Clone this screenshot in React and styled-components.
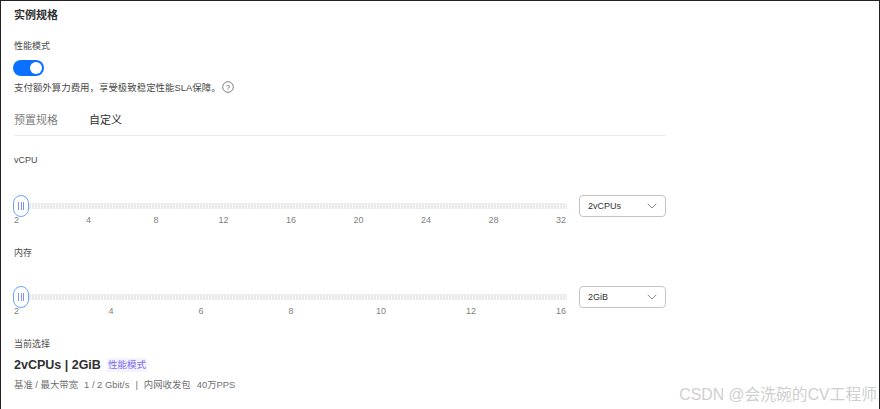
import React from "react";
import styled, { createGlobalStyle } from "styled-components";
import { ChevronDown } from "lucide-react";

const GlobalStyle = createGlobalStyle`
  html, body {
    margin: 0;
    background: #fff;
  }
  body {
    font-family: "Liberation Sans", "Noto Sans CJK SC", sans-serif;
    color: #333;
  }
`;

const Page = styled.div`
  position: relative;
  box-sizing: border-box;
  width: 880px;
  height: 409px;
  padding: 8px 0 0 13px;
  background: #fff;
  border-top: 1px solid #222;
  border-left: 1px solid #222;
  border-right: 1px solid #222;
  overflow: hidden;
`;

const Title = styled.h2`
  margin: 0;
  font-size: 11px;
  line-height: 13px;
  font-weight: 700;
  color: #303030;
`;

const Label = styled.div`
  font-size: 9px;
  line-height: 12px;
  color: #4a4a4a;
  margin-top: ${(props) => props.$top}px;
`;

const Toggle = styled.div`
  display: flex;
  justify-content: flex-end;
  align-items: center;
  box-sizing: border-box;
  width: 31px;
  height: 16px;
  margin: 8px 0 0 -1px;
  padding: 2px;
  border-radius: 8px;
  background: #0b6fff;
`;

const Knob = styled.span`
  width: 12px;
  height: 12px;
  border-radius: 50%;
  background: #fff;
`;

const Desc = styled.div`
  display: flex;
  align-items: center;
  gap: 1px;
  height: 14px;
  margin-top: 4px;
  font-size: 9.45px;
  color: #4a4a4a;
`;

const Help = styled.svg`
  width: 12px;
  height: 12px;
`;

const Tabs = styled.div`
  display: flex;
  gap: 31px;
  width: 652px;
  height: 22px;
  margin-top: 19px;
  border-bottom: 1px solid #ececec;
`;

const Tab = styled.div`
  font-size: 11px;
  line-height: 15px;
  color: ${(props) => (props.$active ? "#303030" : "#808080")};
`;

const SliderRow = styled.div`
  display: flex;
  align-items: flex-start;
  gap: 12px;
  width: 652px;
  margin-top: ${(props) => props.$top}px;
`;

const SliderBox = styled.div`
  width: 553px;
`;

const TrackArea = styled.div`
  position: relative;
  display: flex;
  align-items: center;
  height: 22px;
`;

const Track = styled.div`
  width: 100%;
  height: 6px;
  background: repeating-linear-gradient(
    90deg,
    #ebebeb 0 2px,
    #f6f6f6 2px 3px
  );
`;

const Handle = styled.div`
  position: absolute;
  left: -1px;
  top: 0;
  display: flex;
  align-items: center;
  justify-content: center;
  gap: 1.5px;
  box-sizing: border-box;
  width: 16px;
  height: 22px;
  border: 1.5px solid #69a5ff;
  border-radius: 8px;
  background: #fff;
`;

const HandleBar = styled.span`
  width: 1px;
  height: 8px;
  background: #7f94e8;
`;

const Ticks = styled.div`
  display: flex;
  justify-content: space-between;
  margin: -3px -1px 0 0;
`;

const Tick = styled.span`
  width: 14px;
  font-size: 9px;
  line-height: 12px;
  text-align: center;
  color: #808080;
  &:first-child {
    text-align: left;
  }
`;

const Select = styled.div`
  display: flex;
  align-items: center;
  justify-content: space-between;
  box-sizing: border-box;
  width: 87px;
  height: 22px;
  padding: 0 5px 0 8px;
  border: 1px solid #c4c4c4;
  border-radius: 4px;
  font-size: 9px;
  color: #333;
`;

const Summary = styled.div`
  display: flex;
  align-items: center;
  gap: 6px;
  height: 16px;
  margin-top: 7px;
`;

const Spec = styled.span`
  font-size: 12.5px;
  font-weight: 700;
  color: #303030;
`;

const Badge = styled.span`
  padding: 1px 1px;
  font-size: 9.5px;
  line-height: 12px;
  color: #7d6cf0;
  background: #f4f3ff;
`;

const Meta = styled.div`
  display: flex;
  gap: 6px;
  margin-top: 6px;
  font-size: 9.4px;
  line-height: 12px;
  color: #707070;
`;

const Watermark = styled.div`
  position: absolute;
  right: 2px;
  bottom: 6px;
  font-size: 15.8px;
  line-height: 16px;
  color: #cfcfcf;
  white-space: nowrap;
`;

function Slider({ ticks, top, value }) {
  return (
    <SliderRow $top={top}>
      <SliderBox>
        <TrackArea>
          <Track />
          <Handle>
            <HandleBar />
            <HandleBar />
            <HandleBar />
          </Handle>
        </TrackArea>
        <Ticks>
          {ticks.map((t) => (
            <Tick key={t}>{t}</Tick>
          ))}
        </Ticks>
      </SliderBox>
      <Select>
        {value}
        <ChevronDown size={16} strokeWidth={1.1} color="#666" />
      </Select>
    </SliderRow>
  );
}

export default function App() {
  return (
    <Page>
      <GlobalStyle />
      <Title>实例规格</Title>
      <Label $top={18}>性能模式</Label>
      <Toggle>
        <Knob />
      </Toggle>
      <Desc>
        支付额外算力费用，享受极致稳定性能SLA保障。
        <Help viewBox="0 0 12 12" fill="none">
          <circle cx="6" cy="6" r="5.3" stroke="#666" strokeWidth="0.8" />
          <text x="6" y="8.6" textAnchor="middle" fontSize="7.5" fill="#555">?</text>
        </Help>
      </Desc>
      <Tabs>
        <Tab>预置规格</Tab>
        <Tab $active>自定义</Tab>
      </Tabs>
      <Label $top={18}>vCPU</Label>
      <Slider top={29} value="2vCPUs" ticks={[2, 4, 8, 12, 16, 20, 24, 28, 32]} />
      <Label $top={21}>内存</Label>
      <Slider top={27} value="2GiB" ticks={[2, 4, 6, 8, 10, 12, 16]} />
      <Label $top={21}>当前选择</Label>
      <Summary>
        <Spec>2vCPUs | 2GiB</Spec>
        <Badge>性能模式</Badge>
      </Summary>
      <Meta>
        <span>基准 / 最大带宽</span>
        <span>1 / 2 Gbit/s</span>
        <span>|</span>
        <span>内网收发包</span>
        <span>40万PPS</span>
      </Meta>
      <Watermark>CSDN @会洗碗的CV工程师</Watermark>
    </Page>
  );
}
